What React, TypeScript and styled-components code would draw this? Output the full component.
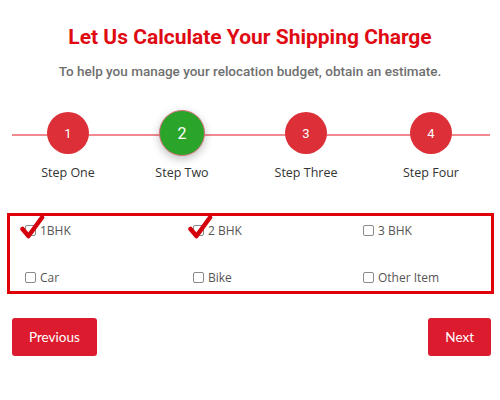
import React from 'react'
import styled, { createGlobalStyle } from 'styled-components'

const GlobalStyle = createGlobalStyle`
  body {
    margin: 0;
    background: #ffffff;
    font-family: Roboto, "Liberation Sans", sans-serif;
  }
`

const Page = styled.div`
  width: 500px;
  height: 400px;
  padding-top: 25px;
  box-sizing: border-box;
`

const Title = styled.h1`
  margin: 0;
  text-align: center;
  font-family: Roboto, sans-serif;
  font-weight: 700;
  font-size: 21px;
  line-height: 25px;
  color: #e00b12;
`

const Subtitle = styled.p`
  margin: 13px 0 0;
  text-align: center;
  font-family: Roboto, sans-serif;
  font-weight: 500;
  font-size: 13.5px;
  line-height: 16px;
  color: #6f6f6f;
`

const Stepper = styled.div`
  position: relative;
  margin: 31px 10px 0 12px;
  display: grid;
  grid-template-columns: 112px 116px 132px 118px;
`

const Line = styled.div`
  position: absolute;
  left: 0;
  right: 0;
  top: 24px;
  height: 2px;
  background: #f08a8f;
`

const Step = styled.div`
  position: relative;
  display: flex;
  flex-direction: column;
  align-items: center;
`

const CircleSlot = styled.div`
  height: 46px;
  display: flex;
  align-items: center;
  justify-content: center;
`

const Circle = styled.div<{ $active?: boolean }>`
  width: ${({ $active }) => ($active ? 44 : 42)}px;
  height: ${({ $active }) => ($active ? 44 : 42)}px;
  border-radius: 50%;
  background: ${({ $active }) => ($active ? '#2aa52a' : '#dc2f37')};
  border: ${({ $active }) => ($active ? '1px solid #d8707a' : 'none')};
  box-shadow: ${({ $active }) => ($active ? '0 3px 8px rgba(0,0,0,0.25)' : 'none')};
  color: #fff;
  display: flex;
  align-items: center;
  justify-content: center;
  font-family: Roboto, sans-serif;
  font-size: ${({ $active }) => ($active ? 16 : 13)}px;
`

const StepLabel = styled.div`
  margin-top: 8px;
  font-family: "Open Sans", sans-serif;
  font-size: 12.5px;
  color: #333;
`

const OptionsBox = styled.div`
  margin: 32px 6px 0 7px;
  border: 3px solid #e0000a;
  padding: 5px 0 5px 15px;
  display: grid;
  grid-template-columns: 168px 170px 1fr;
  row-gap: 29px;
`

const Option = styled.label`
  position: relative;
  display: flex;
  align-items: center;
  gap: 4px;
  height: 18px;
  font-family: "Open Sans", sans-serif;
  font-size: 12px;
  color: #555;
`

const Box = styled.span`
  width: 9px;
  height: 9px;
  border: 1px solid #8a8a8a;
  border-radius: 2px;
  background: #fff;
`

const Tick = styled.svg`
  position: absolute;
  left: -6px;
  top: -7px;
`

const Buttons = styled.div`
  margin: 24px 9px 0 12px;
  display: flex;
  justify-content: space-between;
`

const Button = styled.button`
  height: 38px;
  padding: 0 17px;
  border: none;
  border-radius: 3px;
  background: #dc1c2e;
  color: #fff;
  font-family: Lato, sans-serif;
  font-size: 13.5px;
`

const steps = [
  { n: 1, label: 'Step One' },
  { n: 2, label: 'Step Two', active: true },
  { n: 3, label: 'Step Three' },
  { n: 4, label: 'Step Four' },
]

const options = [
  { label: '1BHK', checked: true },
  { label: '2 BHK', checked: true },
  { label: '3 BHK' },
  { label: 'Car' },
  { label: 'Bike' },
  { label: 'Other Item' },
]

const App: React.FC = () => {
  return (
    <Page>
      <GlobalStyle />
      <Title>Let Us Calculate Your Shipping Charge</Title>
      <Subtitle>To help you manage your relocation budget, obtain an estimate.</Subtitle>

      <Stepper>
        <Line />
        {steps.map((s) => (
          <Step key={s.n}>
            <CircleSlot>
              <Circle $active={s.active}>{s.n}</Circle>
            </CircleSlot>
            <StepLabel>{s.label}</StepLabel>
          </Step>
        ))}
      </Stepper>

      <OptionsBox>
        {options.map((o) => (
          <Option key={o.label}>
            <Box />
            {o.label}
            {o.checked && (
              <Tick width="26" height="26" viewBox="0 0 26 26">
                <path d="M3.5 15 L9.5 22 L23 3.5" fill="none" stroke="#d4000c" strokeWidth="4.5" strokeLinecap="round" strokeLinejoin="round" />
              </Tick>
            )}
          </Option>
        ))}
      </OptionsBox>

      <Buttons>
        <Button>Previous</Button>
        <Button>Next</Button>
      </Buttons>
    </Page>
  )
}

export default App
